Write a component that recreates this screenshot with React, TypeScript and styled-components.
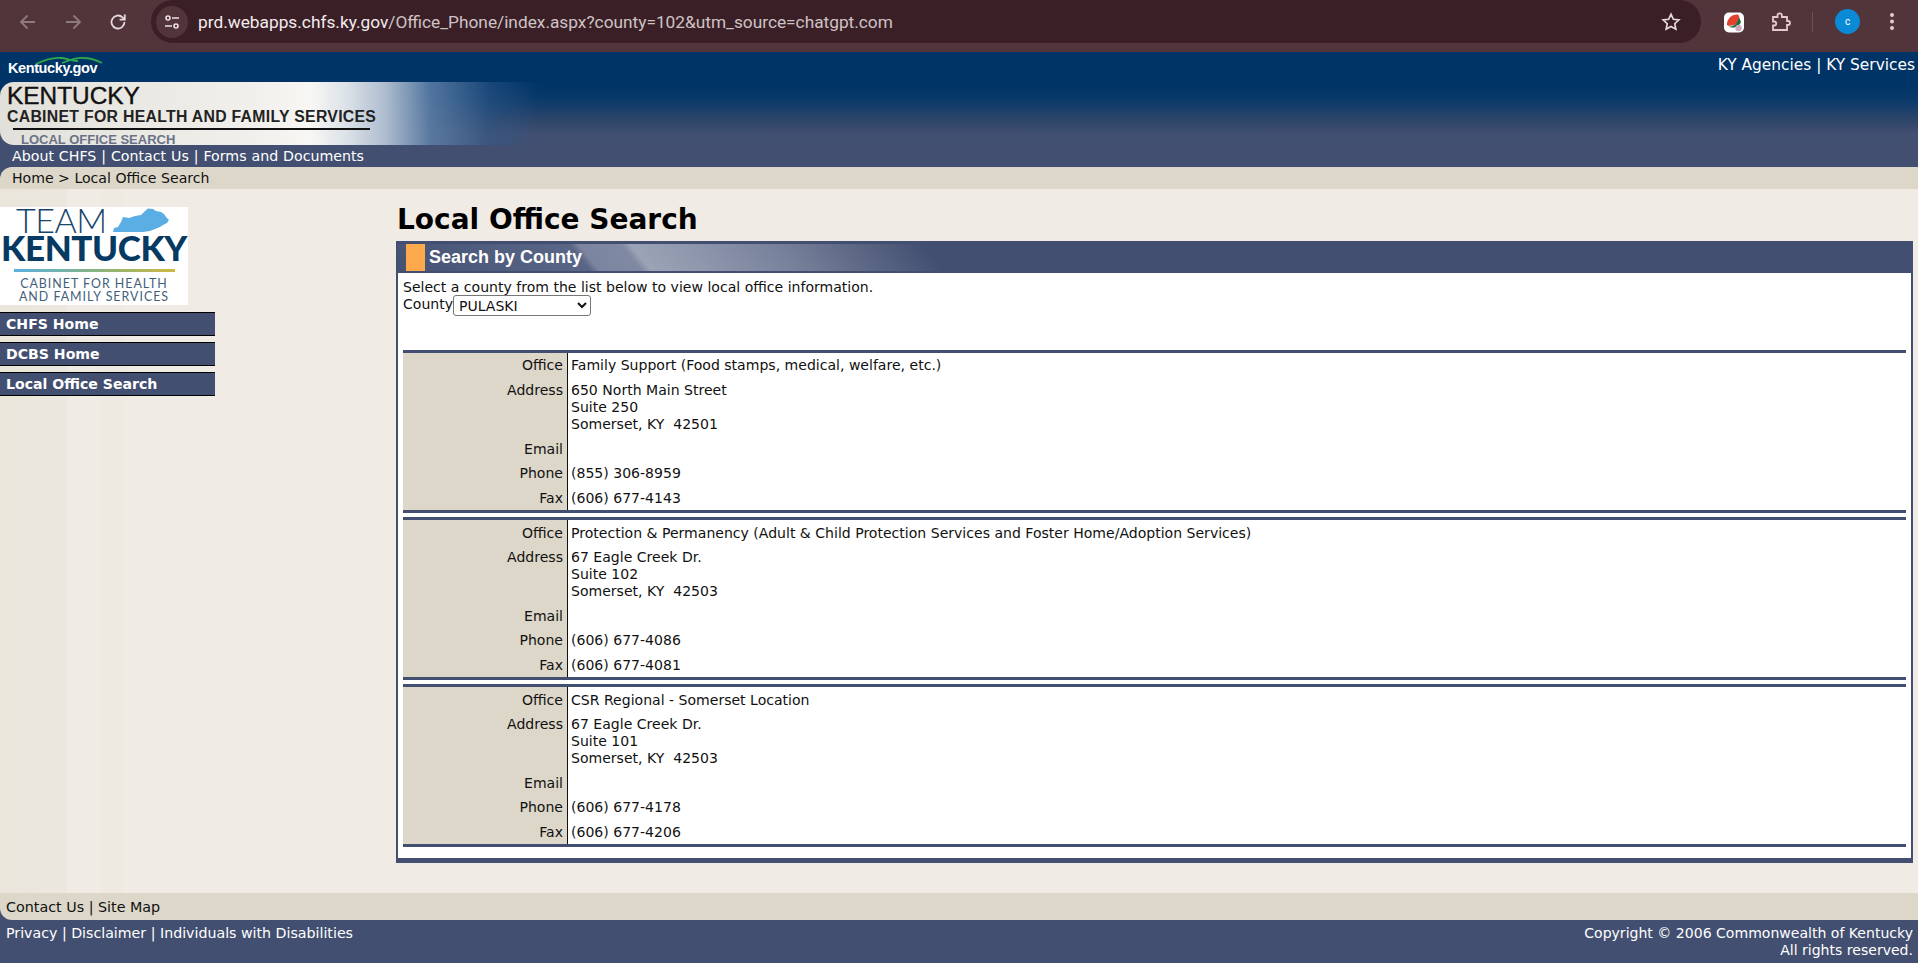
import React from 'react'
import styled, { createGlobalStyle } from 'styled-components'

const Global = createGlobalStyle`
html, body { margin: 0; padding: 0; height: 100%; overflow: hidden; }
body { font-family: "DejaVu Sans", Verdana, sans-serif; font-size: 14.05px; color: #111; background: #f0ebe4; }
`

const Page = styled.div`
display: flex;
flex-direction: column;
height: 963px;
`

/* browser toolbar */
const Toolbar = styled.div`
height: 52px;
flex: none;
background: #52343b;
display: flex;
align-items: flex-start;
`
const NavIcon = styled.svg<{ $left: number }>`
width: 24px;
height: 24px;
margin-top: 10px;
margin-left: ${p => p.$left}px;
flex: none;
`
const Omnibox = styled.div`
width: 1550px;
height: 43px;
margin-left: 21px;
background: #3a2026;
border-radius: 22px;
display: flex;
align-items: center;
flex: none;
`
const SiteChip = styled.div`
width: 32px;
height: 32px;
margin-left: 5px;
border-radius: 50%;
background: #52343b;
display: flex;
align-items: center;
justify-content: center;
flex: none;
`
const Url = styled.div`
margin-left: 10px;
font-family: Roboto, "Liberation Sans", sans-serif;
font-size: 17.3px;
color: #e9dfe1;
flex: 1;
`
const UrlHost = styled.span`
color: #f3ecee;
`
const UrlRest = styled.span`
color: #cfc2c5;
`
const Avatar = styled.div`
width: 25px;
height: 25px;
border-radius: 50%;
background: #0a8ad6;
color: #fff;
font-size: 10px;
font-family: Roboto, sans-serif;
display: flex;
align-items: center;
justify-content: center;
margin-top: 9px;
margin-left: 22px;
flex: none;
`
const ToolDivider = styled.div`
width: 1px;
height: 20px;
background: #6d5057;
margin-top: 12px;
margin-left: 20px;
flex: none;
`

/* site header */
const Header = styled.div`
flex: none;
height: 115px;
display: flex;
flex-direction: column;
background: linear-gradient(180deg, #003366 0, #003366 32px, #0a3a6a 48px, #2d4569 68px, #414f70 82px, #434f70 100%);
`
const TopRow = styled.div`
height: 30px;
display: flex;
justify-content: space-between;
`
const GovLogo = styled.div`
position: relative;
margin-left: 8px;
margin-top: 8px;
font-family: "Liberation Sans", sans-serif;
font-weight: 700;
font-size: 14.5px;
letter-spacing: -0.4px;
line-height: 17px;
color: #fff;
`
const GovSwoosh = styled.svg`
position: absolute;
left: 28px;
top: -4px;
width: 66px;
height: 9px;
`
const TopLinks = styled.div`
padding: 5px 3px 0 0;
color: #fff;
font-size: 15.4px;
line-height: 17px;
`
const Banner = styled.div`
width: 540px;
height: 63px;
overflow: hidden;
border-radius: 14px 0 0 14px;
padding-left: 7px;
box-sizing: border-box;
background: linear-gradient(90deg, #e2e0da 0, #ebe9e4 150px, #f2f0ec 260px, #f8f7f4 310px, #dde3e9 345px, #aebdcf 385px, rgba(95,128,168,.85) 430px, rgba(50,90,140,.5) 490px, rgba(50,90,140,0) 540px);
font-family: "Liberation Sans", sans-serif;
color: #111;
`
const BannerTitle = styled.div`
font-size: 24.4px;
line-height: 26px;
padding-top: 1px;
-webkit-text-stroke: 0.4px #111;
`
const BannerSub = styled.div`
font-weight: 700;
font-size: 15.8px;
line-height: 16px;
letter-spacing: 0.3px;
color: #222;
white-space: nowrap;
`
const BannerRule = styled.div`
width: 357px;
height: 2px;
background: #111;
margin: 3px 0 0 6px;
`
const BannerPage = styled.div`
margin-left: 14px;
margin-top: 3px;
font-weight: 700;
font-size: 13px;
line-height: 14px;
color: #6a7288;
white-space: nowrap;
`
const MenuRow = styled.div`
height: 22px;
padding-left: 12px;
color: #fff;
font-size: 14.2px;
word-spacing: 0.4px;
line-height: 22px;
`

const Crumbs = styled.div`
flex: none;
height: 22px;
background: #434f70;
`
const CrumbInner = styled.div`
height: 22px;
padding-left: 12px;
background: #dcd7c9;
border-top-left-radius: 12px;
font-size: 14.1px;
line-height: 22px;
color: #111;
`

/* main area */
const Main = styled.div`
flex: 1;
display: flex;
min-height: 0;
background: linear-gradient(90deg, #ebe6dc 0, #ece7de 66px, #efeae3 68px, #f0ebe4 100px, #eee9e1 102px, #eee9e1 122px, #f0ebe4 124px);
`
const Sidebar = styled.div`
width: 396px;
flex: none;
padding-top: 18px;
box-sizing: border-box;
`
const LogoBox = styled.div`
width: 188px;
height: 98px;
background: #fff;
display: flex;
flex-direction: column;
align-items: center;
overflow: hidden;
margin-bottom: 7px;
`
const LogoTeamRow = styled.div`
width: 188px;
height: 26px;
display: flex;
align-items: center;
`
const LogoTeam = styled.div`
margin-left: 16px;
font-family: Lato, sans-serif;
font-weight: 300;
font-size: 34px;
line-height: 26px;
color: #17456b;
letter-spacing: -0.5px;
`
const LogoWord = styled.div`
font-family: Lato, sans-serif;
font-weight: 900;
font-size: 35px;
line-height: 30px;
letter-spacing: -0.4px;
color: #063a63;
margin-top: -1px;
`
const LogoRule = styled.div`
width: 161px;
height: 3px;
margin-top: 7px;
background: linear-gradient(90deg, #5ab1e0, #8cb37a 55%, #cdb93f);
`
const LogoText = styled.div`
margin-top: 5px;
font-family: Lato, sans-serif;
font-size: 12.4px;
line-height: 13px;
letter-spacing: 1px;
color: #3f607a;
text-align: center;
white-space: nowrap;
`
const NavList = styled.div`
display: flex;
flex-direction: column;
gap: 6px;
width: 215px;
`
const NavButton = styled.div`
height: 22px;
border-top: 1px solid #000;
border-bottom: 1px solid #000;
background: #434f70;
color: #fff;
font-weight: 700;
font-size: 14.1px;
line-height: 23px;
padding-left: 6px;
`
const Content = styled.div`
flex: 1;
min-width: 0;
padding-right: 5px;
`
const Heading = styled.h1`
margin: 0;
height: 52px;
padding: 13px 0 0 1px;
box-sizing: border-box;
font-size: 28px;
line-height: 36px;
font-weight: 700;
color: #000;
`
const Panel = styled.div`
height: 622px;
box-sizing: border-box;
background: #fff;
border-left: 2px solid #434f70;
border-right: 2px solid #434f70;
border-bottom: 5px solid #434f70;
`
const PanelTitle = styled.div`
height: 32px;
box-sizing: border-box;
padding-left: 8px;
display: flex;
border-top: 3px solid #434f70;
border-bottom: 2px solid #434f70;
background: linear-gradient(51deg, #465273 0, #5a6686 150px, #7c859f 157px, #8089a3 190px, #9ba3b6 197px, #8f97ad 240px, #77819b 310px, #434f70 425px);
`
const Marker = styled.div`
width: 19px;
height: 27px;
background: #ffa94d;
`
const PanelTitleText = styled.div`
margin-left: 4px;
font-family: "Liberation Sans", sans-serif;
font-weight: 700;
font-size: 18px;
line-height: 27px;
color: #fff;
`
const Body = styled.div`
padding: 6px 5px 0 5px;
`
const Line = styled.div`
line-height: 17px;
white-space: nowrap;
`
const CountyRow = styled.div`
display: flex;
align-items: flex-start;
margin-bottom: 34px;
`
const CountyLabel = styled.span`
line-height: 17px;
`
const CountySelect = styled.select`
width: 138px;
height: 21px;
margin: -1px 0 0 0;
padding: 0 0 0 1px;
font-family: "DejaVu Sans", sans-serif;
font-size: 14px;
color: #111;
background: #fff;
border: 1px solid #767676;
border-radius: 3px;
`
const OfficeBlock = styled.div`
border-top: 3px solid #434f70;
border-bottom: 3px solid #434f70;
margin-bottom: 4.5px;
`
const Row = styled.div`
display: flex;
`
const Label = styled.div`
width: 165px;
flex: none;
box-sizing: border-box;
background: #dcd7c9;
border-right: 1px solid #111;
padding: 4.4px 4px 3px 0;
text-align: right;
line-height: 17.1px;
`
const Value = styled.div`
flex: 1;
padding: 4.4px 0 3px 3px;
line-height: 17.1px;
white-space: pre-line;
`

/* footer */
const FooterLinks = styled.div`
flex: none;
height: 27px;
background: #434f70;
`
const FooterLinksInner = styled.div`
height: 27px;
padding-left: 6px;
background: #dcd7c9;
border-bottom-left-radius: 12px;
font-size: 14.3px;
line-height: 28px;
color: #111;
`
const FooterBar = styled.div`
flex: none;
height: 43px;
background: #434f70;
color: #fff;
display: flex;
justify-content: space-between;
padding: 5px 5px 0 6px;
box-sizing: border-box;
font-size: 14.2px;
line-height: 17px;
`
const Copy = styled.div`
text-align: right;
font-size: 14.05px;
`

const offices = [
  {
    office: 'Family Support (Food stamps, medical, welfare, etc.)',
    address: '650 North Main Street\nSuite 250\nSomerset, KY\u00a0\u00a042501',
    phone: '(855) 306-8959',
    fax: '(606) 677-4143',
  },
  {
    office: 'Protection & Permanency (Adult & Child Protection Services and Foster Home/Adoption Services)',
    address: '67 Eagle Creek Dr.\nSuite 102\nSomerset, KY\u00a0\u00a042503',
    phone: '(606) 677-4086',
    fax: '(606) 677-4081',
  },
  {
    office: 'CSR Regional - Somerset Location',
    address: '67 Eagle Creek Dr.\nSuite 101\nSomerset, KY\u00a0\u00a042503',
    phone: '(606) 677-4178',
    fax: '(606) 677-4206',
  },
]

const BrowserBar: React.FC = () => (
  <Toolbar>
    <NavIcon $left={16} viewBox="0 0 24 24" fill="none" stroke="#8f7a7e" strokeWidth="1.8">
      <path d="M19 12H5M11.5 5.5 5 12l6.500 6.500" />
    </NavIcon>
    <NavIcon $left={21} viewBox="0 0 24 24" fill="none" stroke="#8f7a7e" strokeWidth="1.8">
      <path d="M5 12h14M12.500 5.500 19 12l-6.500 6.500" />
    </NavIcon>
    <NavIcon $left={21} viewBox="0 0 24 24" fill="none" stroke="#e6dadc" strokeWidth="1.8">
      <path d="M18.500 12a6.500 6.500 0 1 1-2-4.700L18.500 9.500" />
      <path d="M18.800 4.500v5.200h-5.200" />
    </NavIcon>
    <Omnibox>
      <SiteChip>
        <svg width="18" height="18" viewBox="0 0 18 18" fill="none" stroke="#ecdfe2" strokeWidth="1.6">
          <circle cx="5" cy="5" r="2" />
          <path d="M9 5h7M2 13h7" />
          <circle cx="13" cy="13" r="2" />
        </svg>
      </SiteChip>
      <Url>
        <UrlHost>prd.webapps.chfs.ky.gov</UrlHost>
        <UrlRest>/Office_Phone/index.aspx?county=102&amp;utm_source=chatgpt.com</UrlRest>
      </Url>
      <svg width="22" height="22" viewBox="0 0 24 24" fill="none" stroke="#e6dadc" strokeWidth="1.8" style={{ marginRight: 19 }}>
        <path d="M12 3.500l2.600 5.600 6 .7-4.500 4.100 1.200 6L12 16.900l-5.300 3 1.200-6-4.500-4.100 6-.7z" />
      </svg>
    </Omnibox>
    <NavIcon $left={21} viewBox="0 0 24 24">
      <rect x="2" y="2.500" width="20" height="20" rx="5" fill="#fff" />
      <path d="M5 15C4.500 9 10 4 16 4.500c2.500 2.500 1 8-4 10.500-3 1-5 1.200-7 0z" fill="#e2412f" />
      <path d="M5.500 16.500c5 1 10.500-2.500 11.500-9.500l2 5c-2 5-8 7-13.500 4.500z" fill="#1c6b3a" />
      <circle cx="16.500" cy="18" r="3.200" fill="#d3a6c0" />
    </NavIcon>
    <NavIcon $left={22} viewBox="0 0 24 24" fill="none" stroke="#e6c9cf" strokeWidth="1.8">
      <path d="M5 7h4.500V5.500a2.200 2.200 0 0 1 4.400 0V7H19v4h1a2 2 0 0 1 0 4h-1v5H5v-4.500h1.200a2 2 0 0 0 0-4H5Z" />
    </NavIcon>
    <ToolDivider />
    <Avatar>c</Avatar>
    <NavIcon $left={20} viewBox="0 0 24 24" fill="#e6c9cf">
      <circle cx="12" cy="5" r="2" />
      <circle cx="12" cy="11.500" r="2" />
      <circle cx="12" cy="18" r="2" />
    </NavIcon>
  </Toolbar>
)

const TeamKentuckyLogo: React.FC = () => (
  <LogoBox>
    <LogoTeamRow>
      <LogoTeam>TEAM</LogoTeam>
      <svg width="58" height="26" viewBox="0 0 58 26" style={{ marginLeft: 6, marginTop: 1 }}>
        <path
          d="M0 24 1 20 5 19 8 14 10 9 16 10 22 8 28 7 31 4 35 .5 40 1 43 3 48 4 51 6 53 9 56 12 54 15 50 17 47 19 42 21 37 23 30 24Z"
          fill="#5aaee3"
        />
      </svg>
    </LogoTeamRow>
    <LogoWord>KENTUCKY</LogoWord>
    <LogoRule />
    <LogoText>
      CABINET FOR HEALTH
      <br />
      AND FAMILY SERVICES
    </LogoText>
  </LogoBox>
)

export default function App() {
  return (
    <Page>
      <Global />
      <BrowserBar />
      <Header>
        <TopRow>
          <GovLogo>
            <GovSwoosh viewBox="0 0 66 9" fill="none" strokeWidth="1.800">
              <path d="M0 8C8 4 16 1 26 2c6 1 10 3 16 3" stroke="#2fa84a" />
              <path d="M26 7c8-3 14-6 22-5 6 0 12 2 18 5" stroke="#2fa84a" />
            </GovSwoosh>
            Kentucky.gov
          </GovLogo>
          <TopLinks>KY Agencies | KY Services</TopLinks>
        </TopRow>
        <Banner>
          <BannerTitle>KENTUCKY</BannerTitle>
          <BannerSub>CABINET FOR HEALTH AND FAMILY SERVICES</BannerSub>
          <BannerRule />
          <BannerPage>LOCAL OFFICE SEARCH</BannerPage>
        </Banner>
        <MenuRow>About CHFS | Contact Us | Forms and Documents</MenuRow>
      </Header>
      <Crumbs>
        <CrumbInner>Home &gt; Local Office Search</CrumbInner>
      </Crumbs>
      <Main>
        <Sidebar>
          <TeamKentuckyLogo />
          <NavList>
            <NavButton>CHFS Home</NavButton>
            <NavButton>DCBS Home</NavButton>
            <NavButton>Local Office Search</NavButton>
          </NavList>
        </Sidebar>
        <Content>
          <Heading>Local Office Search</Heading>
          <Panel>
            <PanelTitle>
              <Marker />
              <PanelTitleText>Search by County</PanelTitleText>
            </PanelTitle>
            <Body>
              <Line>Select a county from the list below to view local office information.</Line>
              <CountyRow>
                <CountyLabel>County</CountyLabel>
                <CountySelect defaultValue="PULASKI">
                  <option>PULASKI</option>
                </CountySelect>
              </CountyRow>
              {offices.map(o => (
                <OfficeBlock key={o.office}>
                  <Row>
                    <Label>Office</Label>
                    <Value>{o.office}</Value>
                  </Row>
                  <Row>
                    <Label>Address</Label>
                    <Value>{o.address}</Value>
                  </Row>
                  <Row>
                    <Label>Email</Label>
                    <Value>{'\u00a0'}</Value>
                  </Row>
                  <Row>
                    <Label>Phone</Label>
                    <Value>{o.phone}</Value>
                  </Row>
                  <Row>
                    <Label>Fax</Label>
                    <Value>{o.fax}</Value>
                  </Row>
                </OfficeBlock>
              ))}
            </Body>
          </Panel>
        </Content>
      </Main>
      <FooterLinks>
        <FooterLinksInner>Contact Us | Site Map</FooterLinksInner>
      </FooterLinks>
      <FooterBar>
        <div>Privacy | Disclaimer | Individuals with Disabilities</div>
        <Copy>
          Copyright © 2006 Commonwealth of Kentucky
          <br />
          All rights reserved.
        </Copy>
      </FooterBar>
    </Page>
  )
}
